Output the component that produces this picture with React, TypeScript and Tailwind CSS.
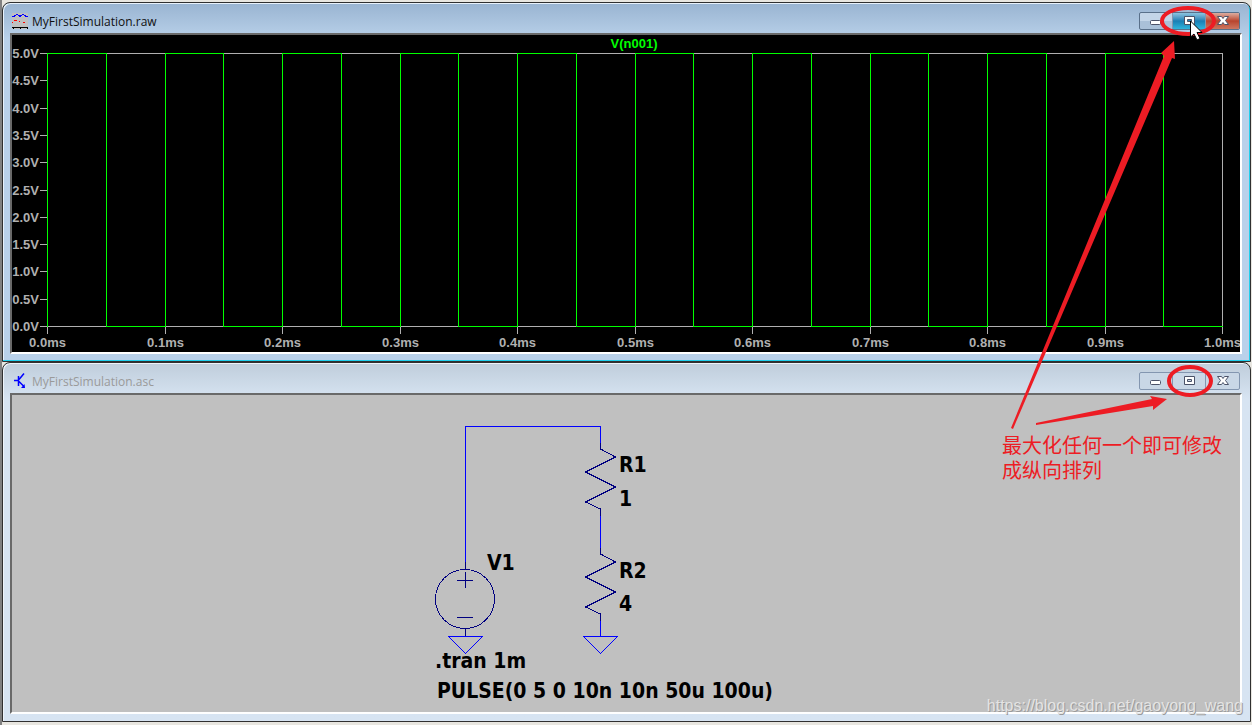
import clsx from 'clsx'
import type { ReactNode } from 'react'

interface PlotProps {
  trace: string
}

const VOLTS = ['5.0V', '4.5V', '4.0V', '3.5V', '3.0V', '2.5V', '2.0V', '1.5V', '1.0V', '0.5V', '0.0V']
const TIMES = ['0.0ms', '0.1ms', '0.2ms', '0.3ms', '0.4ms', '0.5ms', '0.6ms', '0.7ms', '0.8ms', '0.9ms', '1.0ms']

const PLOT_LEFT = 35
const PLOT_TOP = 18
const PLOT_WIDTH = 1175
const PLOT_HEIGHT = 273

const xAt = (step: number) => Math.round(PLOT_LEFT + (PLOT_WIDTH * step) / 20) + 0.5
const yAt = (step: number) => Math.round(PLOT_TOP + (PLOT_HEIGHT * step) / 10) + 0.5

function pulsePath() {
  const high = yAt(0)
  const low = yAt(10)
  let d = `M${xAt(0)} ${low}`
  for (let i = 0; i < 20; i++) {
    d += `V${i % 2 === 0 ? high : low}H${xAt(i + 1)}`
  }
  return d
}

function Plot({ trace }: PlotProps) {
  return (
    <svg className="block h-auto w-full" viewBox="0 0 1228 317" role="img" aria-label={`${trace} waveform`}>
      <g fontFamily="'Liberation Sans', Arial, sans-serif" fontSize="13" fontWeight="700" fill="#b0b0b0">
        {VOLTS.map((v, i) => (
          <text key={v} x="27" y={yAt(i) + 4} textAnchor="end">{v}</text>
        ))}
        {TIMES.map((time, i) => (
          <text key={time} x={xAt(i * 2)} y="312" textAnchor="middle">{time}</text>
        ))}
        <text x="622" y="13" textAnchor="middle" fill="#00ff00">{trace}</text>
      </g>
      <g stroke="#b0b0b0" fill="none" shapeRendering="crispEdges">
        <rect x={xAt(0)} y={yAt(0)} width={PLOT_WIDTH} height={PLOT_HEIGHT} />
        {VOLTS.map((v, i) => <path key={v} d={`M28 ${yAt(i)}H35`} />)}
        {TIMES.map((time, i) => <path key={time} d={`M${xAt(i * 2)} 292V299`} />)}
      </g>
      <path d={pulsePath()} stroke="#00ff00" fill="none" shapeRendering="crispEdges" />
    </svg>
  )
}

function Resistor({ y }: { y: number }) {
  return <path d={`M588.5 ${y}v6l15 8l-30 15l30 15l-30 15l15 7v7`} />
}

function Schematic() {
  return (
    <svg className="block h-auto w-full" viewBox="0 0 1228 317" role="img" aria-label="Circuit schematic">
      <g fill="none" stroke="#0000ff" shapeRendering="crispEdges">
        <path d="M453.5 170V31.5H588.5V48M588.5 121V153M588.5 226V241.5" />
        <path d="M436.5 241.5H470.5L453.5 258.5ZM571.5 241.5H605.5L588.5 258.5Z" />
      </g>
      <g fill="none" stroke="#000080" shapeRendering="crispEdges">
        <Resistor y={48} />
        <Resistor y={153} />
        <circle cx="453" cy="204" r="29.5" />
        <path d="M453.5 167V175M453.5 234V241M445 185.5H461M453.5 177V193M445 222.5H461" />
      </g>
      <g fontFamily="'DejaVu Sans Condensed', 'DejaVu Sans', sans-serif" fontSize="21" fontWeight="700" fill="#000">
        <text x="607" y="77">R1</text>
        <text x="607" y="111">1</text>
        <text x="607" y="183">R2</text>
        <text x="607" y="216">4</text>
        <text x="475" y="175">V1</text>
        <text x="423" y="273">.tran 1m</text>
        <text x="425" y="303">PULSE(0 5 0 10n 10n 50u 100u)</text>
      </g>
    </svg>
  )
}

function WaveIcon() {
  return (
    <svg width="16" height="16" viewBox="0 0 16 16" shapeRendering="crispEdges" aria-hidden="true">
      <path d="M0 0h16v16H0z" fill="#c0c0c0" />
      <path d="M0 3.5h2l3-2.500l3 2.500l3-2.500l3 2.500h2" fill="none" stroke="#0000ff" />
      <path d="M2 7.5h3M7 8.5h1M11 9.5h2M0 9.5h1" stroke="#ff0000" />
      <path d="M0 14.5h16M1.5 14v2M8.5 14v2M15.5 14v2" stroke="#000" />
    </svg>
  )
}

function TransistorIcon() {
  return (
    <svg width="16" height="16" viewBox="0 0 16 16" aria-hidden="true">
      <path d="M2 7.500h4M6.500 3v10M7 6.500l5-6M7 8.500l5 5" fill="none" stroke="#0000ff" strokeWidth="1.500" />
      <path d="M13 15H9l3.500-4z" fill="#0000ff" />
    </svg>
  )
}

function ControlGlyph({ kind }: { kind: string }) {
  return (
    <svg width="14" height="12" viewBox="0 0 14 12" aria-hidden="true" fill="#fff" stroke="#4b5268">
      {kind === 'Minimize' && <rect x="1.500" y="5.500" width="10" height="4" rx="1" />}
      {kind === 'Maximize' && <path fillRule="evenodd" d="M2.500 1.500h10v8h-10zM5.500 4.500h4v2h-4z" />}
      {kind === 'Close' && <path d="M1.500 1.500h4L7 3.500l1.500-2h4L9.500 5.500l3 4h-4L7 7.500l-1.500 2h-4l3-4z" />}
    </svg>
  )
}

interface ChildWindowProps {
  title: string
  active?: boolean
  icon: ReactNode
  children: ReactNode
}

function ChildWindow({ title, active = false, icon, children }: ChildWindowProps) {
  return (
    <section
      aria-label={title}
      className={clsx(
        'flex flex-col rounded-t-lg border border-[#303030] pr-2 pb-[7px] pl-[7px]',
        active
          ? 'bg-linear-to-b from-[#99b4d1] to-[#b9d1ea] to-10% shadow-[inset_-1px_-1px_0_#20d0ee,inset_1px_1px_0_#e7f1fb]'
          : 'bg-linear-to-b from-[#bfcddb] to-[#d7e4f2] to-10% shadow-[inset_1px_1px_0_#eef4fa]'
      )}
    >
      <header className="flex h-[30px] items-center pt-1.5 pr-0.5 pl-0.5">
        {icon}
        <h2
          className={clsx(
            "ml-1 flex-1 pt-0.5 font-['Open_Sans','Noto_Sans',sans-serif] text-[12px]",
            active ? 'text-[#101010]' : 'text-[#9a9a9a]'
          )}
        >
          {title}
        </h2>
        <div
          className={clsx(
            'flex h-[18px] overflow-hidden rounded-xs border',
            active ? 'border-[#59708a] bg-linear-to-b from-[#c3d5e8] from-50% to-[#a9c0d8] to-50%' : 'border-[#8396b0] bg-[#c9d7e6]'
          )}
        >
          {['Minimize', 'Maximize', 'Close'].map((kind) => (
            <button
              key={kind}
              type="button"
              aria-label={kind}
              className={clsx(
                'flex w-[33px] items-center justify-center border-r border-[#8396b0] last:border-r-0',
                active && kind === 'Maximize' && 'bg-linear-to-b from-[#8cc4e0] via-[#1a7fb4] to-[#2fb4dc]',
                active && kind === 'Close' && 'bg-linear-to-b from-[#dcaca0] via-[#b8442e] to-[#cc7660]'
              )}
            >
              <ControlGlyph kind={kind} />
            </button>
          ))}
        </div>
      </header>
      <div
        className={clsx(
          'overflow-hidden border-2 border-t-[#696969] border-r-white border-b-white border-l-[#696969]',
          active ? 'bg-black' : 'bg-[#c0c0c0]'
        )}
      >
        {children}
      </div>
    </section>
  )
}

function Annotations() {
  return (
    <div className="pointer-events-none absolute inset-0">
      <svg className="absolute top-0 left-0" width="1252" height="725" viewBox="0 0 1252 725" aria-hidden="true">
        <g fill="none" stroke="#ed1c24" strokeWidth="4">
          <ellipse cx="1188" cy="21" rx="26" ry="13" />
          <ellipse cx="1190" cy="381" rx="21" ry="14" />
        </g>
        <path d="M1011 428L1164 56L1161 53L1174 41L1175 59L1172 58L1013 429Z" fill="#ed1c24" />
        <path d="M1036 423L1152 399L1150 396L1167 399L1153 410L1153 406L1036 425Z" fill="#ed1c24" />
        <path d="M1190.500 21v16l3.500-3l3 6l3-1.500l-3-6h5z" fill="#fff" stroke="#000" />
      </svg>
      <p className="absolute top-[432px] left-[1002px] font-['Noto_Sans_CJK_SC',sans-serif] text-[20px] leading-[25px] text-[#ed1c24]">
        最大化任何一个即可修改
        <br />
        成纵向排列
      </p>
      <p className="absolute top-[696px] right-[9px] text-[16px] leading-5 text-[#e4e4e4] [text-shadow:1px_1px_0_#9a9a9a]">
        https://blog.csdn.net/gaoyong_wang
      </p>
    </div>
  )
}

export default function App() {
  return (
    <main className="relative overflow-hidden font-['Liberation_Sans',Arial,sans-serif]">
      <div className="flex flex-col border-l-2 border-[#808080] bg-[#e8e6e0] pt-0.5 pr-px pb-[3px]">
        <ChildWindow title="MyFirstSimulation.raw" active icon={<WaveIcon />}>
          <Plot trace="V(n001)" />
        </ChildWindow>
        <ChildWindow title="MyFirstSimulation.asc" icon={<TransistorIcon />}>
          <Schematic />
        </ChildWindow>
      </div>
      <Annotations />
    </main>
  )
}
